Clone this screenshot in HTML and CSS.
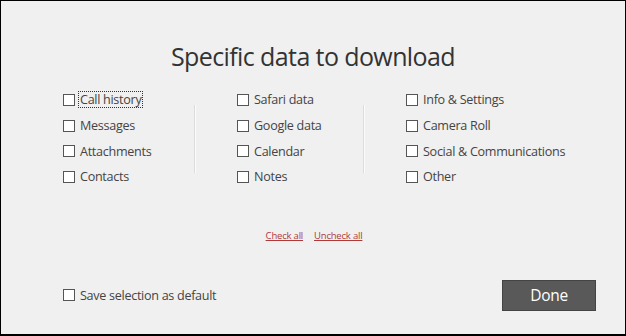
FILE: index.html
```html
<!DOCTYPE html>
<html>
<head>
<meta charset="utf-8">
<link rel="stylesheet" href="styles.css">
</head>
<body>
<div class="dialog">
  <h1 class="title">Specific data to download</h1>
  <div class="columns">
    <div class="col col1">
      <label class="item"><span class="box"></span><span class="lbl focus">Call history</span></label>
      <label class="item"><span class="box"></span><span class="lbl">Messages</span></label>
      <label class="item"><span class="box"></span><span class="lbl">Attachments</span></label>
      <label class="item"><span class="box"></span><span class="lbl">Contacts</span></label>
    </div>
    <div class="divider"></div>
    <div class="col col2">
      <label class="item"><span class="box"></span><span class="lbl">Safari data</span></label>
      <label class="item"><span class="box"></span><span class="lbl">Google data</span></label>
      <label class="item"><span class="box"></span><span class="lbl">Calendar</span></label>
      <label class="item"><span class="box"></span><span class="lbl">Notes</span></label>
    </div>
    <div class="divider"></div>
    <div class="col col3">
      <label class="item"><span class="box"></span><span class="lbl">Info &amp; Settings</span></label>
      <label class="item"><span class="box"></span><span class="lbl">Camera Roll</span></label>
      <label class="item"><span class="box"></span><span class="lbl">Social &amp; Communications</span></label>
      <label class="item"><span class="box"></span><span class="lbl">Other</span></label>
    </div>
  </div>
  <div class="links">
    <a class="link" href="#">Check all</a>
    <a class="link" href="#">Uncheck all</a>
  </div>
  <div class="footer">
    <label class="item"><span class="box"></span><span class="lbl">Save selection as default</span></label>
    <button class="done">Done</button>
  </div>
</div>
</body>
</html>
```
FILE: styles.css
```css
html, body {
  margin: 0;
  padding: 0;
}
body {
  width: 626px;
  height: 336px;
  background: #000;
  font-family: "Open Sans", "DejaVu Sans", sans-serif;
}
.dialog {
  box-sizing: border-box;
  width: 624px;
  height: 333px;
  margin: 1px 0 0 1px;
  background: #f0f0f0;
  display: flex;
  flex-direction: column;
}
.title {
  margin: 38px 0 0 0;
  height: 34px;
  text-align: center;
  font-weight: 400;
  font-size: 25px;
  line-height: 34px;
  color: #333;
  letter-spacing: -0.6px;
}
.columns {
  display: flex;
  margin-top: 14px;
  padding-left: 62px;
}
.col {
  display: flex;
  flex-direction: column;
}
.col1 { width: 131px; }
.col2 { width: 126px; padding-left: 41px; }
.col3 { padding-left: 41px; }
.divider {
  width: 1px;
  margin-top: 18px;
  height: 68px;
  background: #dcdcdc;
  border-right: 1px solid #fbfbfb;
}
.item {
  display: flex;
  align-items: center;
  height: 25.7px;
  font-size: 12.6px;
  color: #444;
  letter-spacing: -0.3px;
}
.box {
  box-sizing: border-box;
  width: 12px;
  height: 12px;
  border: 1px solid #555;
  background: #fff;
  margin-right: 3px;
  flex: none;
}
.lbl {
  padding: 0 1px;
  line-height: 15px;
  border: 1px dotted transparent;
}
.lbl.focus {
  border-color: #333;
}
.links {
  display: flex;
  justify-content: center;
  gap: 11px;
  margin-top: 39px;
  padding-left: 2px;
}
.link {
  font-size: 9.5px;
  color: #b03a3a;
  text-decoration: underline;
  letter-spacing: -0.2px;
}
.footer {
  display: flex;
  align-items: center;
  justify-content: space-between;
  margin-top: 38px;
  padding: 0 29px 0 62px;
}
.done {
  width: 94px;
  height: 31px;
  background: #595959;
  color: #fff;
  border: 1px solid #444;
  font-family: "Open Sans", "DejaVu Sans", sans-serif;
  font-size: 15.5px;
  letter-spacing: -0.3px;
  padding: 0;
}
```
